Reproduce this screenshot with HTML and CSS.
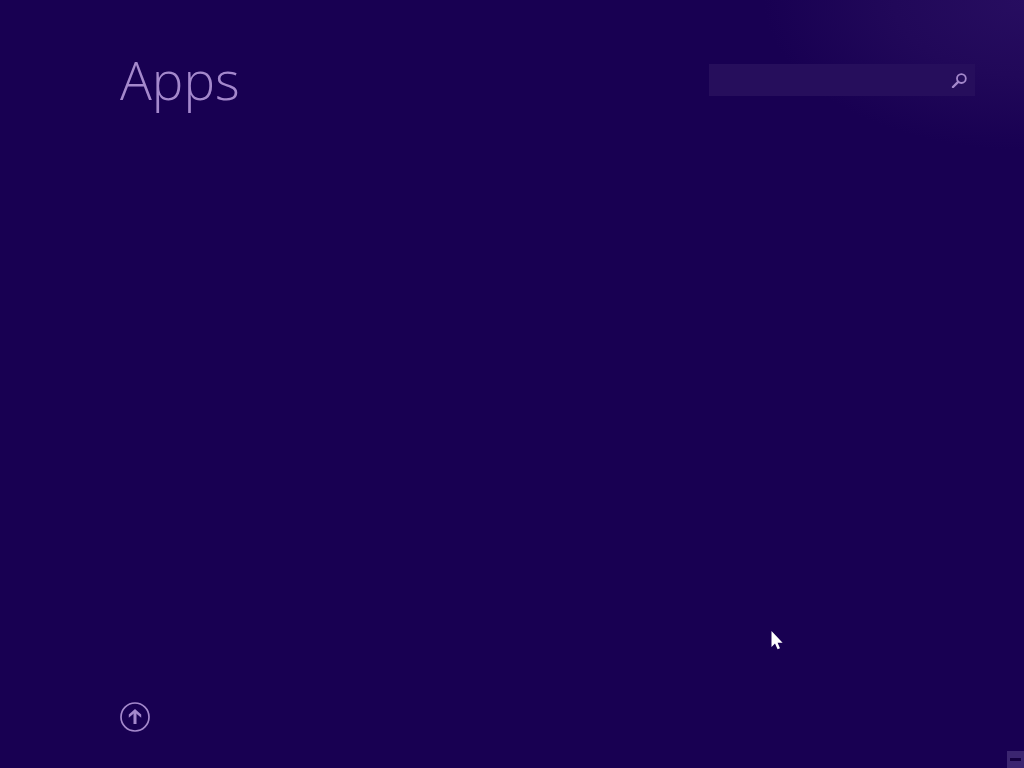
FILE: index.html
```
<!DOCTYPE html>
<html lang="en">
<head>
  <meta charset="UTF-8">
  <meta name="viewport" content="width=device-width, initial-scale=1.0">
  <title>Apps</title>
  <link rel="stylesheet" href="styles.css">
</head>
<body>
  <header>
    <h1>Apps</h1>
    <form class="search" role="search">
      <input type="text" aria-label="Search apps">
      <button type="submit" aria-label="Search">
        <svg width="16" height="16" viewBox="0 0 16 16" fill="none" stroke="currentColor">
          <circle cx="10.4" cy="6.6" r="4.4" stroke-width="1.8"/>
          <path d="M7.2 9.8 L2 15" stroke-width="2.4" stroke-linecap="round"/>
        </svg>
      </button>
    </form>
  </header>
  <main></main>
  <footer>
    <button class="up-button" type="button" aria-label="Back to Start">
      <svg width="30" height="30" viewBox="0 0 30 30" fill="none" stroke="currentColor">
        <circle cx="15" cy="15" r="14" stroke-width="1.7"/>
        <path d="M15 22 V10" stroke-width="3"/>
        <path d="M8.8 15.8 V12.6 L15 7 L21.2 12.6 V15.8 L15 10.6 Z" fill="currentColor" stroke="none"/>
      </svg>
    </button>
  </footer>
  <button class="zoom-button" type="button" aria-label="Zoom out"><span></span></button>
  <svg class="cursor" width="12" height="19" viewBox="0 0 12 19">
    <path d="M0.5 0 V16 L4 12.6 L6.6 18.2 L9 17.2 L6.6 11.8 H11.6 Z" fill="#fff"/>
  </svg>
</body>
</html>
```
FILE: styles.css
```
* {
  margin: 0;
  padding: 0;
  box-sizing: border-box;
}
body {
  min-height: 100vh;
  display: flex;
  flex-direction: column;
  position: relative;
  background: radial-gradient(ellipse 260px 150px at top right, #270d60, #210859 50%, #180052) #180052;
  color: #a488cc;
  font-family: "Open Sans", sans-serif;
}
header {
  display: flex;
  justify-content: space-between;
  align-items: flex-start;
  padding: 40px 49px 0 120px;
}
h1 {
  font-size: 53px;
  font-weight: 300;
  line-height: 80px;
}
.search {
  display: flex;
  width: 266px;
  height: 32px;
  margin-top: 24px;
  background: #260e5c;
}
.search input {
  flex: 1;
  min-width: 0;
  padding: 0 8px;
  border: none;
  outline: none;
  background: transparent;
  color: inherit;
  font-size: 15px;
}
button {
  border: none;
  background: transparent;
  color: inherit;
  cursor: pointer;
}
.search button {
  display: flex;
  justify-content: center;
  align-items: center;
  width: 32px;
}
main {
  flex: 1;
}
footer {
  padding: 0 120px 36px;
}
.up-button {
  display: block;
  width: 30px;
  height: 30px;
}
.zoom-button {
  position: absolute;
  right: 0;
  bottom: 0;
  display: flex;
  justify-content: center;
  align-items: center;
  width: 17px;
  height: 17px;
  background: #3b2570;
}
.zoom-button span {
  width: 11px;
  height: 3px;
  background: #14003f;
}
.cursor {
  position: absolute;
  left: 771px;
  top: 631px;
}
```
